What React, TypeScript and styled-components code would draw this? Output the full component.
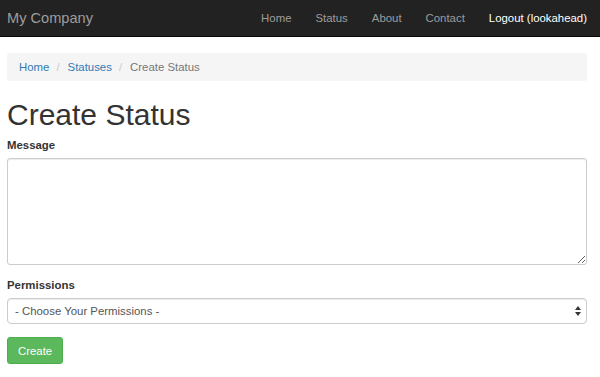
import React from "react";
import styled, { createGlobalStyle } from "styled-components";

const Global = createGlobalStyle`
  html, body { margin: 0; padding: 0; background: #fff; }
  body {
    font-family: "Liberation Sans", Arial, Helvetica, sans-serif;
    font-size: 11.4px;
    line-height: 16px;
    color: #333;
  }
  * { box-sizing: border-box; }
`;

const Navbar = styled.nav`
  display: flex;
  align-items: center;
  justify-content: space-between;
  height: 37px;
  padding: 0 13px 1px 7px;
  background: #222;
  border-bottom: 1px solid #080808;
`;

const Brand = styled.a`
  font-size: 14.6px;
  line-height: 20px;
  color: #9d9d9d;
  text-decoration: none;
`;

const NavList = styled.ul`
  display: flex;
  gap: 24px;
  list-style: none;
  margin: 0;
  padding: 0;
`;

const NavLink = styled.a<{ $active?: boolean }>`
  font-size: 11.4px;
  line-height: 16px;
  color: ${(p) => (p.$active ? "#fff" : "#9d9d9d")};
  text-decoration: none;
`;

const Container = styled.main`
  padding: 16px 13px 0 7px;
`;

const Breadcrumb = styled.ol`
  display: flex;
  list-style: none;
  margin: 0;
  padding: 6px 12px;
  height: 28px;
  background: #f5f5f5;
  border-radius: 3px;
`;

const Crumb = styled.li<{ $first?: boolean }>`
  color: #777;
  &::before {
    content: ${(p) => (p.$first ? "none" : '"/"')};
    color: #ccc;
    padding: 0 8px 0 7px;
  }
`;

const CrumbLink = styled.a`
  color: #337ab7;
  text-decoration: none;
`;

const Title = styled.h1`
  margin: 18px 0 6px;
  font-size: 30px;
  line-height: 32px;
  font-weight: 500;
  color: #333;
`;

const Field = styled.div<{ $gap?: number }>`
  margin-bottom: ${(p) => p.$gap ?? 12}px;
`;

const Label = styled.label`
  display: block;
  font-weight: bold;
  margin-bottom: 5px;
`;

const TextArea = styled.textarea`
  display: block;
  width: 100%;
  height: 107px;
  border: 1px solid #ccc;
  border-radius: 3px;
  box-shadow: inset 0 1px 1px rgba(0, 0, 0, 0.075);
  font: inherit;
  padding: 5px 10px;
  resize: vertical;
`;

const SelectWrap = styled.div`
  position: relative;
`;

const Select = styled.select`
  display: block;
  width: 100%;
  height: 26px;
  appearance: none;
  -webkit-appearance: none;
  background: #fff;
  border: 1px solid #ccc;
  border-radius: 4px;
  box-shadow: inset 0 1px 1px rgba(0, 0, 0, 0.075);
  font: inherit;
  color: #555;
  padding: 0 7px;
`;

const Arrows = styled.svg`
  position: absolute;
  right: 6px;
  top: 8px;
  pointer-events: none;
`;

const Button = styled.button`
  display: inline-block;
  height: 27px;
  padding: 0 10px;
  font: inherit;
  color: #fff;
  background: #5cb85c;
  border: 1px solid #4cae4c;
  border-radius: 3px;
  cursor: pointer;
`;

export default function App() {
  return (
    <>
      <Global />
      <Navbar>
        <Brand href="#">My Company</Brand>
        <NavList>
          <li><NavLink href="#">Home</NavLink></li>
          <li><NavLink href="#">Status</NavLink></li>
          <li><NavLink href="#">About</NavLink></li>
          <li><NavLink href="#">Contact</NavLink></li>
          <li><NavLink href="#" $active>Logout (lookahead)</NavLink></li>
        </NavList>
      </Navbar>
      <Container>
        <Breadcrumb>
          <Crumb $first><CrumbLink href="#">Home</CrumbLink></Crumb>
          <Crumb><CrumbLink href="#">Statuses</CrumbLink></Crumb>
          <Crumb>Create Status</Crumb>
        </Breadcrumb>
        <Title>Create Status</Title>
        <Field>
          <Label>Message</Label>
          <TextArea />
        </Field>
        <Field $gap={13}>
          <Label>Permissions</Label>
          <SelectWrap>
            <Select defaultValue="">
              <option value="">- Choose Your Permissions -</option>
              <option value="public">Public</option>
              <option value="private">Private</option>
            </Select>
            <Arrows width="6" height="10" viewBox="0 0 6 10">
              <path d="M3 0 L6 4 L0 4 Z M3 10 L6 6 L0 6 Z" fill="#333" />
            </Arrows>
          </SelectWrap>
        </Field>
        <Button>Create</Button>
      </Container>
    </>
  );
}
